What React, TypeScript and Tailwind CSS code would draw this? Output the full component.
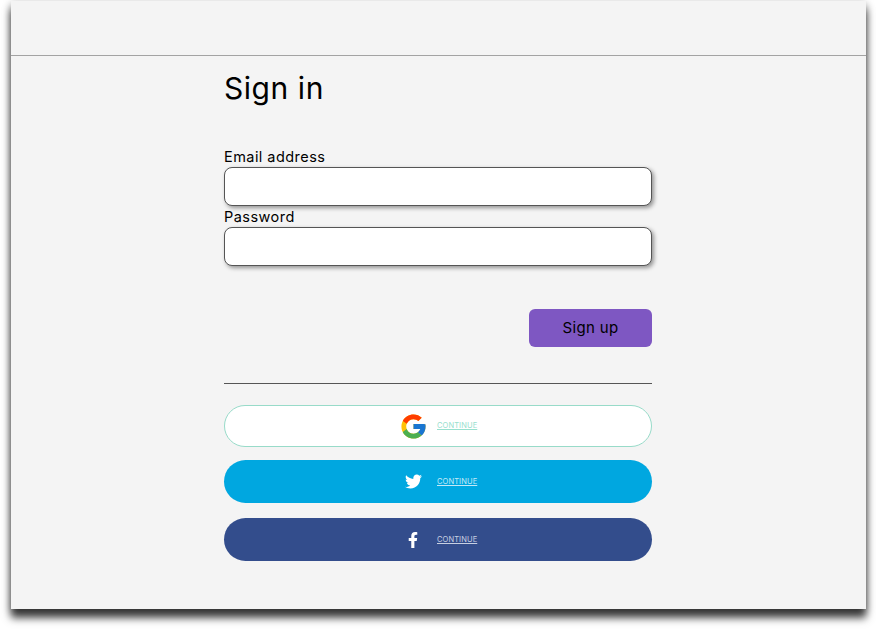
import { FaFacebookF, FaTwitter } from "react-icons/fa";
import { FcGoogle } from "react-icons/fc";

const font = "font-['Inter','Liberation_Sans',sans-serif]";

function Field({ label }: { label: string }) {
  return (
    <label className="block">
      <span className="block h-[21px] text-[14.5px] leading-[22px] tracking-[0.45px] text-black">{label}</span>
      <input
        type="text"
        className="block h-[39px] w-full rounded-[8px] border border-[#555] bg-white shadow-[2px_2px_4px_rgba(0,0,0,0.4)]"
      />
    </label>
  );
}

function Social({ className, icon, textColor }: { className: string; icon: React.ReactNode; textColor: string }) {
  return (
    <button className={`flex w-full items-center justify-center gap-[12px] rounded-full ${className}`}>
      <span className="flex w-[26px] items-center justify-center pl-[2px]">{icon}</span>
      <span className={`w-[40px] text-[7.5px] leading-[10px] tracking-[0.1px] underline ${textColor}`}>CONTINUE</span>
    </button>
  );
}

export default function App() {
  return (
    <div className={`h-[629px] w-[876px] overflow-hidden bg-white pl-[11px] pt-px ${font}`}>
      <div className="h-[608px] w-[855px] bg-[#f4f4f4] shadow-[0_9px_8px_rgba(0,0,0,0.7),0_3px_8px_rgba(0,0,0,0.4)]">
        {/* Header */}
        <header className="h-[55px] border-b border-[#a3a3a3]" />

        {/* Form */}
        <main className="ml-[213px] w-[428px]">
          <h1 className="mt-[12px] h-[40px] text-[30px] leading-[40px] tracking-[0.55px] text-black">Sign in</h1>

          <form className="mt-[38px]">
            <Field label="Email address" />
            <Field label="Password" />

            <div className="mt-[43px] flex justify-end">
              <button
                type="button"
                className="h-[38px] w-[123px] rounded-[6px] bg-[#7e57c2] pt-px text-[15px] tracking-[0.35px] text-black"
              >
                Sign up
              </button>
            </div>
          </form>

          <hr className="mt-[36px] border-[#555]" />

          <div className="mt-[21px]">
            <Social
              className="h-[42px] border border-[#98dbc9] bg-white"
              icon={<FcGoogle size={29} className="shrink-0" />}
              textColor="text-[#98e0ce]"
            />
            <Social
              className="mt-[13px] h-[43px] bg-[#00a7e0]"
              icon={<FaTwitter size={17} color="#fff" className="shrink-0" />}
              textColor="text-[#c4e9f7]"
            />
            <Social
              className="mt-[15px] h-[43px] bg-[#334d8c]"
              icon={<FaFacebookF size={16} color="#fff" className="shrink-0" />}
              textColor="text-[#c8d0e2]"
            />
          </div>
        </main>
      </div>
    </div>
  );
}
